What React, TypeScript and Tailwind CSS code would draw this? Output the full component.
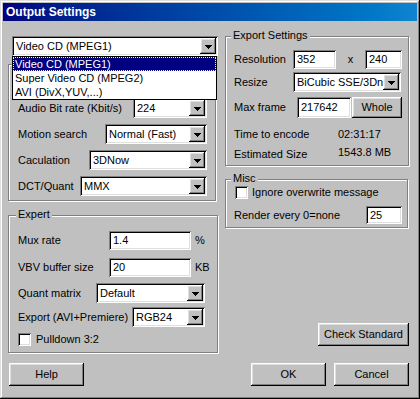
import React from 'react';
import clsx from 'clsx';

// classic 3D edges
const sunken =
  'bg-white shadow-[inset_1px_1px_#808080,inset_-1px_-1px_#fff,inset_2px_2px_#000,inset_-2px_-2px_#dfdfdf]';
const raised =
  'bg-[#c0c0c0] shadow-[inset_-1px_-1px_#000,inset_1px_1px_#fff,inset_-2px_-2px_#808080,inset_2px_2px_#dfdfdf]';

function Arrow() {
  return (
    <svg width="7" height="4" viewBox="0 0 7 4" shapeRendering="crispEdges">
      <path d="M0 0h7v1h-1v1h-1v1h-1v1h-1v-1h-1v-1h-1v-1h-1z" fill="#000" />
    </svg>
  );
}

function Combo({ value, className }: { value: string; className?: string }) {
  return (
    <div className={clsx(sunken, 'flex h-[20px] items-stretch p-[2px]', className)}>
      <span className="flex-1 overflow-hidden whitespace-nowrap pl-[2px] leading-[16px]">{value}</span>
      <span className={clsx(raised, 'flex w-[16px] shrink-0 items-center justify-center pt-[1px]')}>
        <Arrow />
      </span>
    </div>
  );
}

function Field({ value, className }: { value: string; className?: string }) {
  return (
    <div className={clsx(sunken, 'flex items-center overflow-hidden whitespace-nowrap pl-[4px]', className)}>
      {value}
    </div>
  );
}

function Button({ children, className }: { children: React.ReactNode; className?: string }) {
  return <div className={clsx(raised, 'flex items-center justify-center', className)}>{children}</div>;
}

function CheckBox() {
  return <div className={clsx(sunken, 'h-[13px] w-[13px] shrink-0')} />;
}

function Group({
  label,
  labelLeft,
  className,
  children,
}: {
  label?: string;
  labelLeft?: string;
  className?: string;
  children: React.ReactNode;
}) {
  return (
    <div className={clsx('relative border border-[#808080] shadow-[inset_1px_1px_#fff,1px_1px_#fff]', className)}>
      {label && (
        <span className={clsx('absolute -top-[8px] bg-[#c0c0c0] px-[2px] leading-[13px]', labelLeft)}>{label}</span>
      )}
      {children}
    </div>
  );
}

export default function App() {
  return (
    <div className="h-[399px] w-[420px] bg-[#c0c0c0] p-[3px] font-['Liberation_Sans',Arial,sans-serif] text-[11px] leading-[13px] text-black shadow-[inset_-1px_-1px_#000,inset_1px_1px_#dfdfdf,inset_-2px_-2px_#808080,inset_2px_2px_#fff]">
      {/* Title bar */}
      <div className="flex h-[18px] items-center bg-gradient-to-r from-[#000080] to-[#1084d0] pl-[3px]">
        <span className="text-[12px] font-bold text-white">Output Settings</span>
      </div>

      <div className="flex">
        {/* Left column */}
        <div className="ml-[5px] flex w-[210px] flex-col">
          <div className="relative z-10 ml-[4px] mt-[15px] w-[206px]">
            <Combo value="Video CD (MPEG1)" className="w-[206px]" />
            <div className="absolute left-0 top-full h-[44px] w-[205px] border border-black bg-white">
              <div className="h-[14px] bg-[#000080] pl-[2px] leading-[14px] text-white outline-1 -outline-offset-1 outline-dotted outline-[#ffff80]">
                Video CD (MPEG1)
              </div>
              <div className="h-[14px] pl-[2px] leading-[14px]">Super Video CD (MPEG2)</div>
              <div className="h-[14px] pl-[2px] leading-[14px]">AVI (DivX,YUV,...)</div>
            </div>
          </div>

          {/* group under the open list; its top row is hidden by the list */}
          <Group className="mt-[8px] h-[137px] w-[208px]">
            <div className="flex flex-col gap-[6px] pl-[9px] pr-[8px] pt-[33px]">
              <div className="flex h-[20px] items-center justify-between">
                <span>Audio Bit rate (Kbit/s)</span>
                <Combo value="224" className="w-[74px]" />
              </div>
              <div className="flex h-[20px] items-center justify-between">
                <span>Motion search</span>
                <Combo value="Normal (Fast)" className="w-[102px]" />
              </div>
              <div className="flex h-[20px] items-center justify-between">
                <span>Caculation</span>
                <Combo value="3DNow" className="w-[118px]" />
              </div>
              <div className="flex h-[20px] items-center justify-between">
                <span>DCT/Quant</span>
                <Combo value="MMX" className="w-[127px]" />
              </div>
            </div>
          </Group>

          <Group label="Expert" labelLeft="left-[7px]" className="mt-[14px] h-[138px] w-[210px]">
            <div className="flex flex-col pl-[9px] pt-[15px]">
              <div className="flex h-[19px] items-center">
                <span className="w-[91px]">Mux rate</span>
                <Field value="1.4" className="h-[19px] w-[82px]" />
                <span className="ml-[4px]">%</span>
              </div>
              <div className="mt-[8px] flex h-[19px] items-center">
                <span className="w-[91px]">VBV buffer size</span>
                <Field value="20" className="h-[19px] w-[82px]" />
                <span className="ml-[4px]">KB</span>
              </div>
              <div className="mt-[6px] flex h-[20px] items-center">
                <span className="w-[78px]">Quant matrix</span>
                <Combo value="Default" className="w-[109px]" />
              </div>
              <div className="mt-[4px] flex h-[20px] items-center">
                <span className="w-[114px]">Export (AVI+Premiere)</span>
                <Combo value="RGB24" className="w-[73px]" />
              </div>
              <div className="mt-[6px] flex h-[13px] items-center gap-[5px]">
                <CheckBox />
                <span>Pulldown 3:2</span>
              </div>
            </div>
          </Group>
        </div>

        {/* Right column */}
        <div className="ml-[7px] flex w-[184px] flex-col">
          <Group label="Export Settings" labelLeft="left-[5px]" className="mt-[15px] h-[130px] w-[184px]">
            <div className="flex flex-col pl-[8px] pt-[13px]">
              <div className="flex h-[19px] items-center">
                <span className="w-[59px]">Resolution</span>
                <Field value="352" className="h-[19px] w-[43px]" />
                <span className="w-[29px] text-center">x</span>
                <Field value="240" className="h-[19px] w-[37px]" />
              </div>
              <div className="mt-[3px] flex h-[20px] items-center">
                <span className="w-[59px]">Resize</span>
                <Combo value="BiCubic SSE/3Dnow" className="w-[108px]" />
              </div>
              <div className="mt-[5px] flex h-[21px] items-center">
                <span className="w-[63px]">Max frame</span>
                <Field value="217642" className="h-[21px] w-[54px]" />
                <Button className="ml-[1px] h-[21px] w-[50px]">Whole</Button>
              </div>
              <div className="mt-[8px] flex h-[16px] items-center">
                <span className="w-[104px]">Time to encode</span>
                <span>02:31:17</span>
              </div>
              <div className="mt-[4px] flex h-[16px] items-center">
                <span className="w-[104px]">Estimated Size</span>
                <span className="-mt-[3px]">1543.8 MB</span>
              </div>
            </div>
          </Group>

          <Group label="Misc" labelLeft="left-[5px]" className="mt-[13px] h-[49px] w-[183px]">
            <div className="flex flex-col pl-[8px] pt-[6px]">
              <div className="ml-[1px] flex h-[13px] items-center gap-[4px]">
                <CheckBox />
                <span>Ignore overwrite message</span>
              </div>
              <div className="mt-[7px] flex h-[18px] items-center">
                <span className="w-[132px]">Render every 0=none</span>
                <Field value="25" className="h-[18px] w-[36px]" />
              </div>
            </div>
          </Group>

          <Button className="mt-[95px] h-[23px] w-[91px] self-end">Check Standard</Button>
        </div>
      </div>

      {/* Bottom buttons */}
      <div className="ml-[6px] mt-[10px] flex w-[400px]">
        <Button className="h-[23px] w-[75px]">Help</Button>
        <Button className="ml-auto h-[23px] w-[75px]">OK</Button>
        <Button className="ml-[8px] h-[23px] w-[75px]">Cancel</Button>
      </div>
    </div>
  );
}
